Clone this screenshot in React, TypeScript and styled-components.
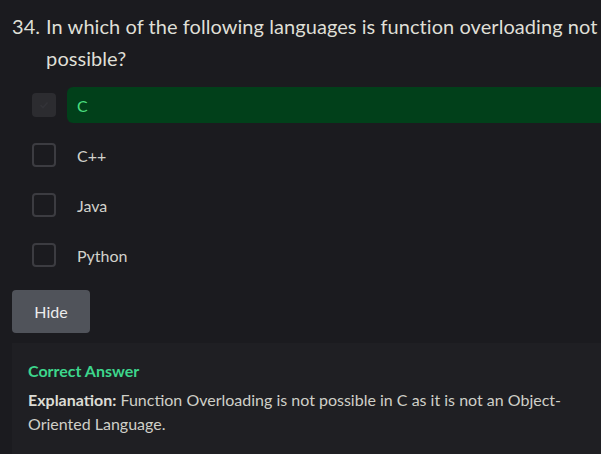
import React from "react";
import styled, { createGlobalStyle } from "styled-components";

const GlobalStyle = createGlobalStyle`
  html, body {
    margin: 0;
    background: #1b1b1f;
    overflow: hidden;
  }
  body {
    font-family: Lato, "Open Sans", sans-serif;
    color: #dfdfd6;
  }
`;

const Page = styled.div`
  width: 640px;
  padding: 10px 12px 0;
  box-sizing: border-box;
`;

const Heading = styled.h2`
  display: flex;
  gap: 6px;
  margin: 0 0 13px;
  font-size: 20px;
  letter-spacing: 0.06px;
  font-weight: 400;
  line-height: 32px;
  color: #dfdfd6;
`;

const Options = styled.div`
  display: flex;
  flex-direction: column;
  gap: 14px;
  padding-left: 20px;
`;

const Row = styled.label`
  display: flex;
  align-items: center;
  gap: 11px;
  height: 36px;
`;

const Box = styled.span<{ checked?: boolean }>`
  width: 24px;
  height: 24px;
  box-sizing: border-box;
  border-radius: 4px;
  flex-shrink: 0;
  display: flex;
  align-items: center;
  justify-content: center;
  background: ${(p) => (p.checked ? "#2c2c30" : "transparent")};
  border: ${(p) => (p.checked ? "none" : "2px solid #3c3c41")};
`;

const Label = styled.span<{ correct?: boolean }>`
  flex: 1;
  height: 36px;
  display: flex;
  align-items: center;
  padding-left: 10px;
  border-radius: ${(p) => (p.correct ? "6px 0 0 6px" : "0")};
  background: ${(p) => (p.correct ? "#01401a" : "transparent")};
  color: ${(p) => (p.correct ? "#4ade80" : "#d2d2cc")};
  font-size: 16px;
`;

const HideButton = styled.button`
  margin-top: 17px;
  width: 78px;
  height: 43px;
  border: none;
  border-radius: 4px;
  background: #50535a;
  color: #ececec;
  font-family: inherit;
  font-size: 16px;
`;

const AnswerBox = styled.div`
  margin-top: 10px;
  padding: 16px 16px 20px;
  background: #1f1f23;
`;

const AnswerTitle = styled.div`
  color: #3dd68c;
  font-weight: 700;
  font-size: 16px;
  line-height: 24px;
  margin-bottom: 5px;
`;

const Explanation = styled.p`
  margin: 0;
  font-size: 16px;
  line-height: 24px;
  color: #cfcfc8;

  strong {
    color: #dcdcd5;
  }
`;

const options = [
  { text: "C", correct: true },
  { text: "C++" },
  { text: "Java" },
  { text: "Python" },
];

export default function App() {
  return (
    <Page>
      <GlobalStyle />
      <Heading>
        <span>34.</span>
        <span>In which of the following languages is function overloading not possible?</span>
      </Heading>
      <Options>
        {options.map((o) => (
          <Row key={o.text}>
            <Box checked={o.correct}>
              {o.correct && (
                <svg width="12" height="12" viewBox="0 0 12 12">
                  <path d="M2.5 6.2 5 8.5 9.5 3.5" fill="none" stroke="#333338" strokeWidth="1.6" />
                </svg>
              )}
            </Box>
            <Label correct={o.correct}>{o.text}</Label>
          </Row>
        ))}
      </Options>
      <HideButton>Hide</HideButton>
      <AnswerBox>
        <AnswerTitle>Correct Answer</AnswerTitle>
        <Explanation>
          <strong>Explanation:</strong> Function Overloading is not possible in C as it is not an Object-Oriented Language.
        </Explanation>
      </AnswerBox>
    </Page>
  );
}
